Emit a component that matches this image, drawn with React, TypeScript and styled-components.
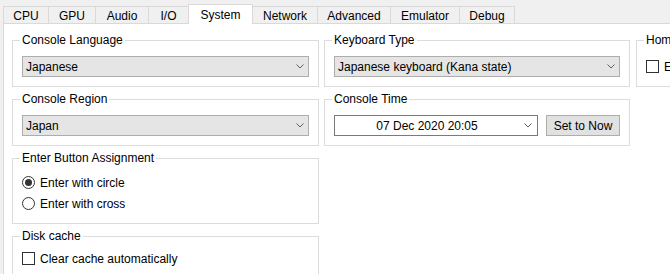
import React from "react";
import styled, { createGlobalStyle } from "styled-components";

const GlobalStyle = createGlobalStyle`
  html, body {
    margin: 0;
    padding: 0;
    background: #f0f0f0;
    overflow: hidden;
  }

  body {
    font-family: "Liberation Sans", Arial, sans-serif;
    font-size: 12px;
    color: #000;
  }
`;

const tabs = [
  { label: "CPU", width: 46 },
  { label: "GPU", width: 48 },
  { label: "Audio", width: 54 },
  { label: "I/O", width: 41 },
  { label: "System", width: 65, active: true },
  { label: "Network", width: 66 },
  { label: "Advanced", width: 74 },
  { label: "Emulator", width: 70 },
  { label: "Debug", width: 56 },
];

const Chevron = () => (
  <svg width="8" height="5" viewBox="0 0 8 5">
    <polyline points="0.5,0.5 4,4 7.5,0.5" fill="none" stroke="#606060" strokeWidth="1" />
  </svg>
);

const App = () => {
  return (
    <Window>
      <GlobalStyle />
      <TabRow>
        {tabs.map((tab) => (
          <Tab key={tab.label} $width={tab.width} $active={tab.active}>
            {tab.label}
          </Tab>
        ))}
      </TabRow>
      <Panel>
        <Columns>
          <Column $width={307}>
            <GroupBox>
              <Legend>Console Language</Legend>
              <Combo>
                <span>Japanese</span>
                <Chevron />
              </Combo>
            </GroupBox>
            <GroupBox>
              <Legend>Console Region</Legend>
              <Combo>
                <span>Japan</span>
                <Chevron />
              </Combo>
            </GroupBox>
            <GroupBox $pad="7px 9px 9px">
              <Legend>Enter Button Assignment</Legend>
              <OptionRow>
                <Radio $checked />
                Enter with circle
              </OptionRow>
              <OptionRow>
                <Radio />
                Enter with cross
              </OptionRow>
            </GroupBox>
            <GroupBox $pad="5px 9px 6px">
              <Legend>Disk cache</Legend>
              <OptionRow>
                <Check />
                Clear cache automatically
              </OptionRow>
            </GroupBox>
          </Column>
          <Column $width={306}>
            <GroupBox>
              <Legend>Keyboard Type</Legend>
              <Combo>
                <span>Japanese keyboard (Kana state)</span>
                <Chevron />
              </Combo>
            </GroupBox>
            <GroupBox>
              <Legend>Console Time</Legend>
              <TimeRow>
                <DatePicker>
                  <DateText>07 Dec 2020 20:05</DateText>
                  <DateArrow>
                    <Chevron />
                  </DateArrow>
                </DatePicker>
                <Button>Set to Now</Button>
              </TimeRow>
            </GroupBox>
          </Column>
          <Column $width={306} $offset={1}>
            <GroupBox>
              <Legend>Homebrew</Legend>
              <OptionRow>
                <Check />
                Enable /host_root/
              </OptionRow>
            </GroupBox>
          </Column>
        </Columns>
      </Panel>
    </Window>
  );
};

const Window = styled.div`
  width: 1000px;
  height: 274px;
`;

const TabRow = styled.div`
  display: flex;
  align-items: flex-end;
  padding: 4px 0 0 3px;
`;

const Tab = styled.div<{ $width: number; $active?: boolean }>`
  box-sizing: border-box;
  flex: none;
  width: ${(p) => p.$width}px;
  height: ${(p) => (p.$active ? 20 : 17)}px;
  margin-left: -1px;
  margin-bottom: ${(p) => (p.$active ? -1 : 0)}px;
  padding-top: ${(p) => (p.$active ? 0 : 1)}px;
  border: 1px solid #d9d9d9;
  border-bottom: none;
  background: ${(p) => (p.$active ? "#ffffff" : "#f0f0f0")};
  display: flex;
  align-items: center;
  justify-content: center;
  position: relative;
  z-index: ${(p) => (p.$active ? 1 : 0)};

  &:first-child {
    margin-left: 0;
  }
`;

const Panel = styled.div`
  margin-left: 3px;
  min-height: 300px;
  border: 1px solid #d9d9d9;
  background: #ffffff;
  padding: 9px 0 0 8px;
`;

const Columns = styled.div`
  display: flex;
  align-items: flex-start;
  gap: 5px;
`;

const Column = styled.div<{ $width: number; $offset?: number }>`
  flex: none;
  width: ${(p) => p.$width}px;
  margin-left: ${(p) => p.$offset ?? 0}px;
  display: flex;
  flex-direction: column;
  gap: 5px;
`;

const GroupBox = styled.fieldset<{ $pad?: string }>`
  margin: 0;
  min-width: 0;
  box-sizing: border-box;
  padding: ${(p) => p.$pad ?? "9px"};
  border: 1px solid #dcdcdc;
`;

const Legend = styled.legend`
  padding: 0 2px;
  margin-left: -2px;
  line-height: 14px;
`;

const Combo = styled.div`
  box-sizing: border-box;
  height: 21px;
  border: 1px solid #adadad;
  background: #e5e5e5;
  display: flex;
  align-items: center;
  justify-content: space-between;
  padding: 0 4px 0 3px;
`;

const OptionRow = styled.div`
  height: 21px;
  display: flex;
  align-items: center;
  gap: 5px;
  white-space: nowrap;
`;

const Radio = styled.span<{ $checked?: boolean }>`
  box-sizing: border-box;
  width: 13px;
  height: 13px;
  border: 1px solid #333333;
  border-radius: 50%;
  background: #ffffff;
  display: flex;
  align-items: center;
  justify-content: center;

  &::after {
    content: "";
    display: ${(p) => (p.$checked ? "block" : "none")};
    width: 7px;
    height: 7px;
    border-radius: 50%;
    background: #333333;
  }
`;

const Check = styled.span`
  box-sizing: border-box;
  width: 13px;
  height: 13px;
  border: 1px solid #333333;
  background: #ffffff;
`;

const TimeRow = styled.div`
  display: flex;
  gap: 8px;
`;

const DatePicker = styled.div`
  box-sizing: border-box;
  flex: 1;
  height: 21px;
  border: 1px solid #7a7a7a;
  background: #ffffff;
  display: flex;
  align-items: center;
`;

const DateText = styled.span`
  flex: 1;
  text-align: center;
`;

const DateArrow = styled.span`
  width: 18px;
  display: flex;
  justify-content: center;
`;

const Button = styled.div`
  box-sizing: border-box;
  width: 74px;
  height: 21px;
  border: 1px solid #adadad;
  background: #e1e1e1;
  display: flex;
  align-items: center;
  justify-content: center;
`;

export default App;
